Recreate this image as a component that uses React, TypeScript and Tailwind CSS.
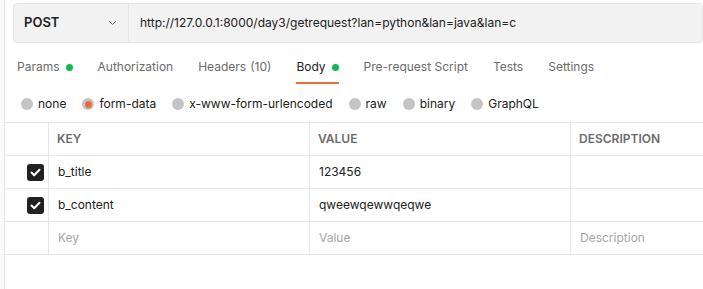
import React from 'react';

const tabs = [
  { label: 'Params', dot: true },
  { label: 'Authorization' },
  { label: 'Headers', count: '(10)' },
  { label: 'Body', dot: true, active: true },
  { label: 'Pre-request Script' },
  { label: 'Tests' },
  { label: 'Settings' },
];

const bodyTypes = ['none', 'form-data', 'x-www-form-urlencoded', 'raw', 'binary', 'GraphQL'];

const rows = [
  { key: 'b_title', value: '123456' },
  { key: 'b_content', value: 'qweewqewwqeqwe' },
];

const Check = () => (
  <div className="w-[17px] h-[17px] rounded-[3px] bg-[#212121] flex items-center justify-center">
    <svg width="11" height="9" viewBox="0 0 11 9" fill="none">
      <path d="M1.5 4.5L4.2 7.2L9.5 1.8" stroke="white" strokeWidth="2" strokeLinecap="round" strokeLinejoin="round" />
    </svg>
  </div>
);

export default function App() {
  return (
    <div className="w-[703px] h-[289px] overflow-hidden bg-white flex font-['Inter',sans-serif] text-[12px]">
      <div className="w-[4px] bg-[#fafafa]" />
      <div className="flex-1 border-l border-[#e6e6e6] flex flex-col min-w-0">
        {/* request bar */}
        <div className="mt-[3px] ml-[8px] h-[40px] flex border border-[#e6e6e6] rounded-[4px] bg-[#f2f2f2]">
          <div className="w-[115px] flex items-center justify-between pl-[10px] pr-[11px] border-r border-[#e6e6e6]">
            <span className="font-semibold text-[13px] text-[#212121]">POST</span>
            <svg width="9" height="6" viewBox="0 0 9 6" fill="none">
              <path d="M1 1L4.5 4.5L8 1" stroke="#6b6b6b" strokeWidth="1" />
            </svg>
          </div>
          <div className="flex items-center pl-[11px] text-[#212121] whitespace-nowrap">
            http://127.0.0.1:8000/day3/getrequest?lan=python&amp;lan=java&amp;lan=c
          </div>
        </div>

        {/* tabs */}
        <div className="mt-[9px] ml-[12px] h-[32px] flex gap-[25px]">
          {tabs.map((t) => (
            <div
              key={t.label}
              className={`flex items-center gap-[6px] border-b-2 ${t.active ? 'border-[#f26b3a] text-[#212121]' : 'border-transparent text-[#6b6b6b]'}`}
            >
              <span>{t.label}</span>
              {t.count && <span className="-ml-[2px]">{t.count}</span>}
              {t.dot && <span className="w-[7px] h-[7px] rounded-full bg-[#0cbb52]" />}
            </div>
          ))}
        </div>

        {/* body types */}
        <div className="mt-[8px] ml-[16px] h-[24px] flex items-center gap-[16px]">
          {bodyTypes.map((b) => (
            <div key={b} className="flex items-center gap-[5px] text-[#212121]">
              <span className="w-[12px] h-[12px] rounded-full bg-[#c4c4c4] flex items-center justify-center">
                {b === 'form-data' && <span className="w-[7px] h-[7px] rounded-full bg-[#f26b3a]" />}
              </span>
              <span>{b}</span>
            </div>
          ))}
        </div>

        {/* table */}
        <div className="mt-[6px] border-t border-[#e6e6e6]">
          <div className="grid grid-cols-[44px_261px_261px_1fr] h-[33px] border-b border-[#e6e6e6] font-semibold text-[#6b6b6b]">
            <div className="border-r border-[#e6e6e6]" />
            <div className="border-r border-[#e6e6e6] flex items-center pl-[8px]">KEY</div>
            <div className="border-r border-[#e6e6e6] flex items-center pl-[8px]">VALUE</div>
            <div className="flex items-center pl-[8px]">DESCRIPTION</div>
          </div>
          {rows.map((r) => (
            <div key={r.key} className="grid grid-cols-[44px_261px_261px_1fr] h-[33px] border-b border-[#e6e6e6] text-[#212121]">
              <div className="border-r border-[#e6e6e6] flex items-center justify-end pr-[4px]">
                <Check />
              </div>
              <div className="border-r border-[#e6e6e6] flex items-center pl-[9px]">{r.key}</div>
              <div className="border-r border-[#e6e6e6] flex items-center pl-[9px]">{r.value}</div>
              <div />
            </div>
          ))}
          <div className="grid grid-cols-[44px_261px_261px_1fr] h-[33px] border-b border-[#e6e6e6] text-[#a6a6a6]">
            <div className="border-r border-[#e6e6e6]" />
            <div className="border-r border-[#e6e6e6] flex items-center pl-[9px]">Key</div>
            <div className="border-r border-[#e6e6e6] flex items-center pl-[9px]">Value</div>
            <div className="flex items-center pl-[9px]">Description</div>
          </div>
        </div>
      </div>
    </div>
  );
}
